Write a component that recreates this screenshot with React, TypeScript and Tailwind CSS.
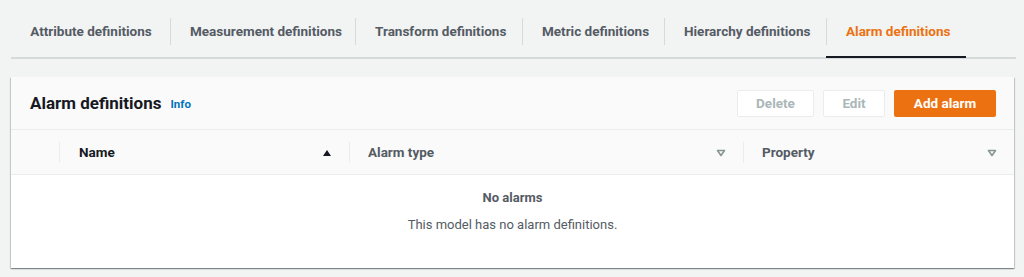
import React from "react";

const tabs: [string, number][] = [
  ["Attribute definitions", 122],
  ["Measurement definitions", 147],
  ["Transform definitions", 129],
  ["Metric definitions", 104],
  ["Hierarchy definitions", 124],
  ["Alarm definitions", 102],
];

function SortUp() {
  return (
    <svg width="10" height="8" viewBox="0 0 10 8">
      <path d="M1 7 L5 1 L9 7 Z" fill="#16191f" />
    </svg>
  );
}

function SortNone() {
  return (
    <svg width="10" height="8" viewBox="0 0 10 8">
      <path d="M1.5 1.5 L8.5 1.5 L5 6.5 Z" fill="none" stroke="#879596" strokeWidth="1.6" strokeLinejoin="round" />
    </svg>
  );
}

export default function App() {
  return (
    <div
      className="w-[1024px] h-[277px] bg-[#f2f3f3] overflow-hidden"
      style={{ fontFamily: "Roboto, 'Liberation Sans', sans-serif" }}
    >
      <div className="pt-[18px] px-[11px]">
        <div className="flex border-b-2 border-[#d5dbdb] w-[1005px]">
          {tabs.map(([t, w], i) => {
            const active = i === tabs.length - 1;
            return (
              <div key={t} className="relative flex items-start">
                {i > 0 && <div className="w-px h-[27px] bg-[#d5dbdb]" />}
                <div
                  className={
                    "relative h-[39px] flex items-start pt-[5px] pl-[19px] pr-[18px] text-[13.5px] font-bold leading-[16px] whitespace-nowrap " +
                    (active ? "text-[#ec7211]" : "text-[#545b64]")
                  }
                >
                  <span className="block text-center" style={{ width: w }}>{t}</span>
                  {active && (
                    <div className="absolute left-[-1px] right-0 bottom-[-1px] h-[2px] bg-[#16191f]" />
                  )}
                </div>
              </div>
            );
          })}
        </div>
      </div>

      <div className="mx-[11px] mt-[18px] w-[1003px] bg-white shadow-[0_1px_1px_0_rgba(0,28,36,0.3),1px_1px_1px_0_rgba(0,28,36,0.15),-1px_1px_1px_0_rgba(0,28,36,0.15)]">
        <div className="h-[53px] bg-[#fafafa] border-b border-[#eaeded] flex items-center pl-[19px] pr-[18px]">
          <div className="text-[17px] font-bold text-[#16191f] leading-[22px]">Alarm definitions</div>
          <div className="ml-[9px] mt-[3px] text-[11.5px] font-bold text-[#0073bb]">Info</div>
          <div className="ml-auto flex gap-[9px] mt-[1px]">
            <div className="w-[77px] h-[27px] border border-[#eaeded] rounded-[2px] bg-white flex items-center justify-center text-[13.5px] font-bold text-[#aab7b8]">
              Delete
            </div>
            <div className="w-[62px] h-[27px] border border-[#eaeded] rounded-[2px] bg-white flex items-center justify-center text-[13.5px] font-bold text-[#aab7b8]">
              Edit
            </div>
            <div className="w-[102px] h-[27px] rounded-[2px] bg-[#ec7211] flex items-center justify-center text-[13.5px] font-bold text-white">
              Add alarm
            </div>
          </div>
        </div>

        <div className="h-[45px] bg-[#fafafa] border-b border-[#eaeded] flex items-center text-[13.5px] font-bold pt-[1px]">
          <div className="w-[49px] h-[21px] border-r border-[#eaeded]" />
          <div className="w-[289px] flex items-center pl-[19px] pr-[17px] text-[#16191f]">
            <span>Name</span>
            <span className="ml-auto"><SortUp /></span>
          </div>
          <div className="w-px h-[21px] bg-[#eaeded]" />
          <div className="w-[393px] flex items-center pl-[18px] pr-[17px] text-[#545b64]">
            <span>Alarm type</span>
            <span className="ml-auto"><SortNone /></span>
          </div>
          <div className="w-px h-[21px] bg-[#eaeded]" />
          <div className="flex-1 flex items-center pl-[18px] pr-[17px] text-[#545b64]">
            <span>Property</span>
            <span className="ml-auto"><SortNone /></span>
          </div>
        </div>

        <div className="h-[93px] flex flex-col items-center pt-[14px] text-[13px] text-[#545b64]">
          <div className="font-bold leading-[18px]">No alarms</div>
          <div className="mt-[9px] leading-[18px]">This model has no alarm definitions.</div>
        </div>
      </div>
    </div>
  );
}
